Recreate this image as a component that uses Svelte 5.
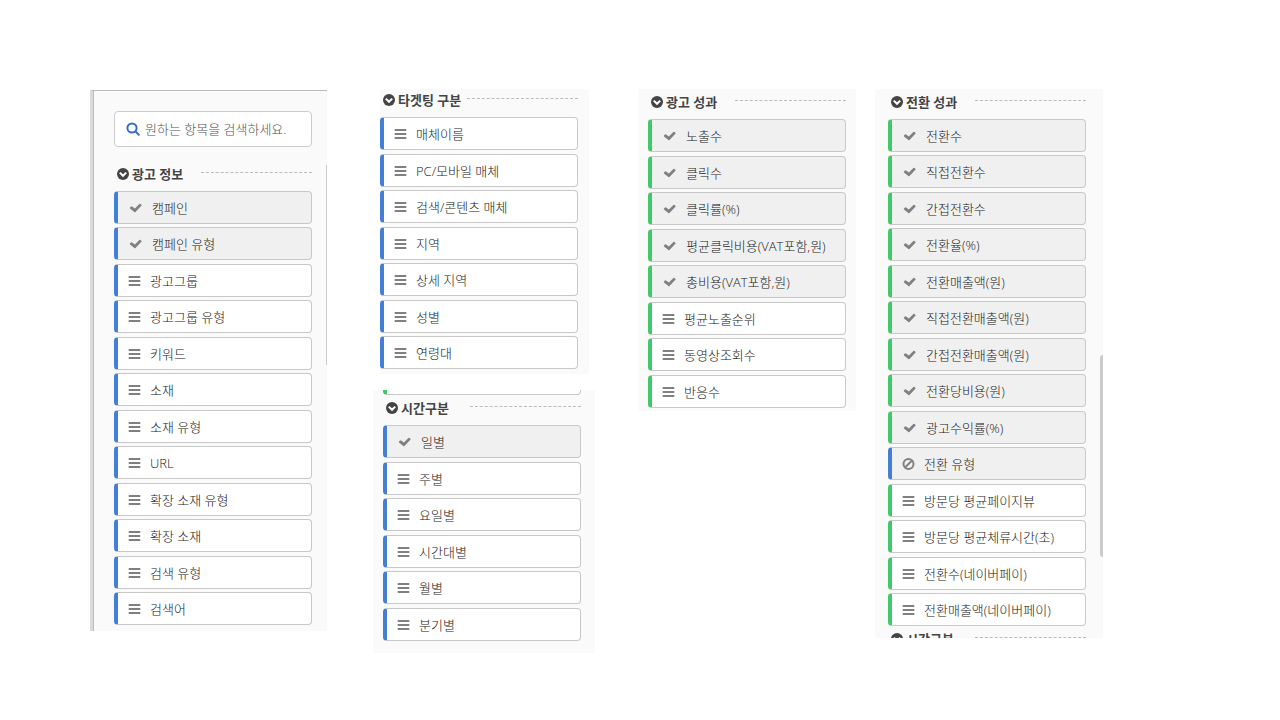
<script lang="ts">
  interface Item {
    label: string;
    state?: 'checked' | 'blocked';
    tone?: 'blue' | 'green';
  }

  interface Group {
    title: string;
    tone: 'blue' | 'green';
    shortFirst?: boolean;
    items: Item[];
  }

  const on = (label: string): Item => ({ label, state: 'checked' });
  const off = (label: string): Item => ({ label });

  const adInfo: Group = {
    title: '광고 정보',
    tone: 'blue',
    shortFirst: true,
    items: [
      on('캠페인'),
      on('캠페인 유형'),
      off('광고그룹'),
      off('광고그룹 유형'),
      off('키워드'),
      off('소재'),
      off('소재 유형'),
      off('URL'),
      off('확장 소재 유형'),
      off('확장 소재'),
      off('검색 유형'),
      off('검색어'),
    ],
  };

  const targeting: Group = {
    title: '타겟팅 구분',
    tone: 'blue',
    items: [
      off('매체이름'),
      off('PC/모바일 매체'),
      off('검색/콘텐츠 매체'),
      off('지역'),
      off('상세 지역'),
      off('성별'),
      off('연령대'),
    ],
  };

  const time: Group = {
    title: '시간구분',
    tone: 'blue',
    items: [on('일별'), off('주별'), off('요일별'), off('시간대별'), off('월별'), off('분기별')],
  };

  const adResult: Group = {
    title: '광고 성과',
    tone: 'green',
    items: [
      on('노출수'),
      on('클릭수'),
      on('클릭률(%)'),
      on('평균클릭비용(VAT포함,원)'),
      on('총비용(VAT포함,원)'),
      off('평균노출순위'),
      off('동영상조회수'),
      off('반응수'),
    ],
  };

  const conversion: Group = {
    title: '전환 성과',
    tone: 'green',
    shortFirst: true,
    items: [
      on('전환수'),
      on('직접전환수'),
      on('간접전환수'),
      on('전환율(%)'),
      on('전환매출액(원)'),
      on('직접전환매출액(원)'),
      on('간접전환매출액(원)'),
      on('전환당비용(원)'),
      on('광고수익률(%)'),
      { label: '전환 유형', state: 'blocked', tone: 'blue' },
      off('방문당 평균페이지뷰'),
      off('방문당 평균체류시간(초)'),
      off('전환수(네이버페이)'),
      off('전환매출액(네이버페이)'),
    ],
  };
</script>

{#snippet heading(title: string)}
  <div class="heading">
    <h2>
      <svg class="chevron" viewBox="0 0 12 12" aria-hidden="true">
        <circle cx="6" cy="6" r="6" />
        <path d="M2.8 4.6 6 7.8l3.2-3.2" />
      </svg>
      <span>{title}</span>
    </h2>
    <span class="rule"></span>
  </div>
{/snippet}

{#snippet group(g: Group)}
  {@render heading(g.title)}
  <ul class:short-first={g.shortFirst}>
    {#each g.items as item}
      <li>
        <button
          type="button"
          class="item {item.tone ?? g.tone}"
          class:checked={item.state === 'checked'}
          class:blocked={item.state === 'blocked'}
          aria-pressed={item.state === 'checked'}
        >
          {#if item.state === 'checked'}
            <svg viewBox="0 0 14 14" aria-hidden="true">
              <path class="fill" d="M12.4 4.8 6.5 11a.9.9 0 0 1-1.2 0L1 7.6a.8.8 0 0 1 0-1.1l.9-1a.8.8 0 0 1 1.1 0l2.9 2.1 4.5-4.7a.8.8 0 0 1 1.1 0l.9.8a.8.8 0 0 1 0 1.1z" />
            </svg>
          {:else if item.state === 'blocked'}
            <svg viewBox="0 0 14 14" aria-hidden="true">
              <circle class="line" cx="6.5" cy="7" r="5" />
              <path class="line" d="m3 10.5 7-7" />
            </svg>
          {:else}
            <svg viewBox="0 0 14 14" aria-hidden="true">
              <path class="fill" d="M.7 2h11.6v2H.7zM.7 6h11.6v2H.7zM.7 10h11.6v2H.7z" />
            </svg>
          {/if}
          <span>{item.label}</span>
        </button>
      </li>
    {/each}
  </ul>
{/snippet}

<main>
  <section class="panel info">
    <label class="search">
      <svg viewBox="0 0 14 14" aria-hidden="true">
        <circle cx="6" cy="6" r="4.6" />
        <path d="m9.4 9.4 3.4 3.4" />
      </svg>
      <input type="text" aria-label="항목 검색" placeholder="원하는 항목을 검색하세요." />
    </label>
    {@render group(adInfo)}
    <span class="scrollbar"></span>
  </section>

  <div class="column">
    <section class="panel targeting">
      {@render group(targeting)}
    </section>
    <section class="panel time">
      <div class="cut-item"><div class="item green"></div></div>
      {@render group(time)}
    </section>
  </div>

  <section class="panel result">
    {@render group(adResult)}
  </section>

  <section class="panel conversion">
    {@render group(conversion)}
    <div class="cut-heading">{@render heading(time.title)}</div>
    <span class="scrollbar"></span>
  </section>
</main>

<style>
  :global(body) {
    background: #fff;
  }

  main {
    display: grid;
    grid-template-columns: minmax(0, 237fr) minmax(0, 268fr) minmax(0, 261fr) minmax(0, 247fr);
    align-items: start;
    padding: 89px 177px 0 90px;
    font-family: 'Open Sans', 'Noto Sans CJK KR', sans-serif;
    font-size: 13px;
    color: #222;
  }

  .panel {
    position: relative;
    box-sizing: border-box;
    background: #fafafa;
  }

  .info {
    margin-top: 1px;
    padding: 20px 15px 2px 21px;
    border-top: 1px solid #bbb;
    border-left: 3px solid #dadada;
    box-shadow: inset 1px 0 #bbb;
  }

  .column {
    margin-left: 46px;
  }

  .targeting {
    margin: 0 6px 16px 7px;
    padding: 1px 11px 1px 0;
  }

  .time {
    padding: 0 14px 9px 10px;
  }

  .result {
    margin-left: 43px;
    padding: 3px 10px 0;
  }

  .conversion {
    margin-left: 19px;
    padding: 3px 17px 0 13px;
  }

  .search {
    display: flex;
    align-items: center;
    gap: 5px;
    box-sizing: border-box;
    height: 36px;
    margin-bottom: 17px;
    padding: 0 8px 0 11px;
    border: 1px solid #ccc;
    border-radius: 4px;
    background: #fff;
  }

  .search svg {
    flex: none;
    width: 14px;
    height: 14px;
    fill: none;
    stroke: #2f6fc9;
    stroke-width: 2;
    stroke-linecap: round;
  }

  .search input {
    flex: 1;
    min-width: 0;
    padding: 0;
    border: 0;
    outline: 0;
    background: none;
    font: inherit;
    font-weight: 300;
    color: #222;
  }

  .search input::placeholder {
    color: #555;
    opacity: 1;
  }

  .heading {
    display: flex;
    justify-content: space-between;
    height: 20px;
    padding-bottom: 7px;
  }

  h2 {
    display: flex;
    align-items: center;
    gap: 3px;
    height: 20px;
    margin: 0 0 0 3px;
    font-size: 13px;
    font-weight: 700;
    line-height: 20px;
    color: #444;
    white-space: nowrap;
  }

  .chevron {
    width: 12px;
    height: 12px;
    fill: #444;
  }

  .chevron path {
    fill: none;
    stroke: #fff;
    stroke-width: 2;
  }

  .rule {
    width: 56%;
    height: 8px;
    border-bottom: 1px dashed #bbb;
  }

  ul {
    display: grid;
    grid-auto-rows: 37px 36px;
    margin: 0;
    padding: 0;
    list-style: none;
  }

  ul.short-first {
    grid-auto-rows: 36px 37px;
  }

  .item {
    display: flex;
    align-items: center;
    gap: 8px;
    box-sizing: border-box;
    width: 100%;
    height: 33px;
    padding: 0 0 0 10px;
    border: 1px solid #c8c8c8;
    border-left-width: 4px;
    border-radius: 4px;
    background: #fff;
    font: inherit;
    font-weight: 300;
    line-height: 20px;
    color: #222;
    white-space: nowrap;
  }

  .blue {
    border-left-color: #447fd6;
  }

  .green {
    border-left-color: #43c76b;
  }

  .checked,
  .blocked {
    background: #f0f0f0;
  }

  .checked {
    gap: 9px;
    padding-left: 11px;
  }

  .item svg {
    flex: none;
    width: 14px;
    height: 14px;
  }

  .fill {
    fill: #808080;
  }

  .line {
    fill: none;
    stroke: #808080;
    stroke-width: 2;
  }

  .cut-item {
    display: flex;
    align-items: flex-end;
    height: 5px;
    margin-bottom: 3px;
    overflow: hidden;
  }

  .cut-item .item {
    flex: none;
  }

  .cut-heading {
    height: 9px;
    margin-top: -1px;
    overflow: hidden;
  }

  .scrollbar {
    position: absolute;
    right: 0;
    background: #ccc;
  }

  .info .scrollbar {
    top: 74px;
    width: 1px;
    height: 200px;
  }

  .conversion .scrollbar {
    top: 266px;
    width: 3px;
    height: 202px;
    border-radius: 3px 0 0 3px;
  }
</style>
